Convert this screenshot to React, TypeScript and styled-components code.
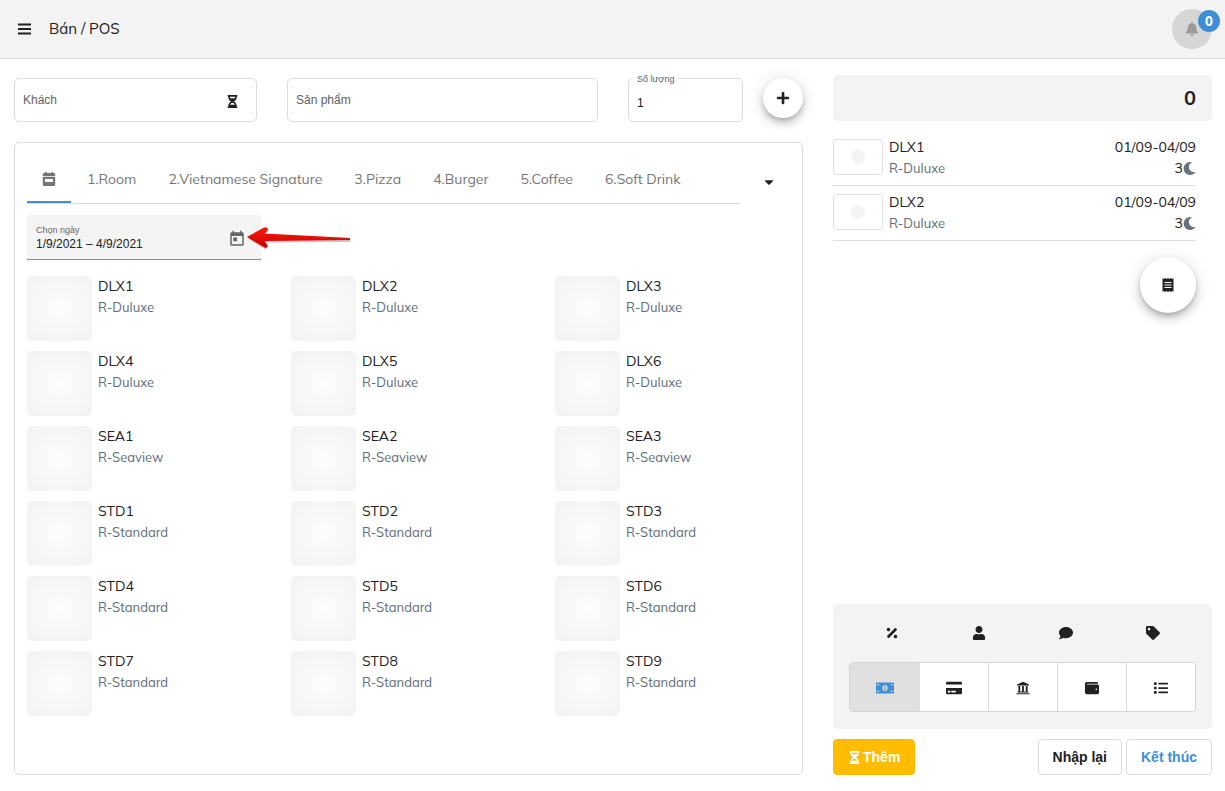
import React from 'react';
import styled, { createGlobalStyle, css } from 'styled-components';
import {
  FaBell, FaPlus, FaMoon, FaPercentage, FaUser, FaComment, FaTag,
  FaCreditCard, FaWallet, FaList, FaHourglassHalf, FaCaretDown,
} from 'react-icons/fa';
import { MdToday } from 'react-icons/md';

const BLUE = '#3f8fd6';
const INK = '#212121';
const LINE = '#dcdcdc';
const PANEL = '#f3f3f3';
const UI = 'Muli, Mulish, Nunito, "Open Sans", "Noto Sans", sans-serif';
const FORM = 'Helvetica, "Liberation Sans", Arial, sans-serif';

const Global = createGlobalStyle`
  *, *::before, *::after { box-sizing: border-box; }
  html, body, #root { height: 100%; }
  body { margin: 0; background: #fff; color: ${INK}; font-family: ${UI}; font-size: 14px; line-height: 20px; }
  button, input { font: inherit; color: inherit; }
  button { cursor: pointer; background: none; border: 0; padding: 0; }
  svg { display: block; flex: none; }
  h1, p { margin: 0; }
`;

const Page = styled.div`
  min-height: 100%;
  display: flex;
  flex-direction: column;
`;

const TopBar = styled.header`
  display: flex;
  align-items: center;
  height: 59px;
  padding: 0 13px 0 18px;
  background: ${PANEL};
  border-bottom: 1px solid ${LINE};
`;

const PageTitle = styled.h1`
  flex: 1;
  padding-left: 18px;
  font-size: 15px;
  font-weight: 400;
`;

const BellButton = styled.button`
  position: relative;
  display: grid;
  place-items: center;
  width: 40px;
  height: 40px;
  border-radius: 50%;
  background: #d6d6d6;
  color: #9b9b9b;
`;

const Badge = styled.span`
  position: absolute;
  top: 1px;
  right: -8px;
  width: 22px;
  border-radius: 11px;
  background: ${BLUE};
  color: #fff;
  font-size: 13px;
  font-weight: 800;
  line-height: 22px;
  text-align: center;
`;

const Body = styled.div`
  flex: 1;
  display: flex;
  gap: 30px;
  padding: 16px 13px 16px 14px;
`;

const Main = styled.main`
  flex: 1;
  min-width: 0;
  display: flex;
  flex-direction: column;
  gap: 20px;
`;

const Filters = styled.form`
  display: flex;
  align-items: flex-start;
  padding-top: 3px;
  font-family: ${FORM};
  font-size: 12px;
`;

const Outlined = styled.div<{ $share: number; $gap: number }>`
  position: relative;
  flex: ${p => p.$share} 1 ${p => p.$share}px;
  min-width: 0;
  display: flex;
  align-items: center;
  height: 44px;
  margin-right: ${p => p.$gap}px;
  border: 1px solid ${LINE};
  border-radius: 5px;
  input {
    flex: 1;
    align-self: stretch;
    min-width: 0;
    width: 100%;
    border: 0;
    padding: 6px 8px 0;
    outline: 0;
    background: none;
  }
`;

const FieldLabel = styled.label<{ $raised?: boolean }>`
  position: absolute;
  top: 11px;
  left: 4px;
  padding: 0 4px;
  color: #616161;
  pointer-events: none;
  ${p => p.$raised && css`
    top: -6px;
    background: #fff;
    font-size: 9px;
    line-height: 12px;
  `}
`;

const TrailingButton = styled.button`
  margin-right: 17px;
  padding-top: 2px;
`;

const RoundButton = styled.button<{ $size: number }>`
  display: grid;
  place-items: center;
  flex: none;
  width: ${p => p.$size}px;
  height: ${p => p.$size}px;
  border-radius: 50%;
  background: #fff;
  box-shadow: 0 3px 5px -1px rgba(0,0,0,.2), 0 6px 10px rgba(0,0,0,.14), 0 1px 18px rgba(0,0,0,.12);
`;

const Catalog = styled.section`
  flex: 1;
  padding: 12px 4px 12px 12px;
  border: 1px solid ${LINE};
  border-radius: 5px;
`;

const TabRow = styled.div`
  display: flex;
  align-items: center;
`;

const Tabs = styled.div`
  flex: 1;
  min-width: 0;
  display: flex;
  height: 49px;
  border-bottom: 1px solid ${LINE};
`;

const Tab = styled.button<{ $active?: boolean }>`
  display: flex;
  align-items: center;
  padding: 0 16px;
  color: #757575;
  white-space: nowrap;
  ${p => p.$active && css`
    justify-content: center;
    width: 44px;
    padding: 0;
    box-shadow: inset 0 -2px ${BLUE};
  `}
`;

const MoreButton = styled.button`
  display: grid;
  place-items: center;
  width: 58px;
  height: 48px;
  padding-top: 4px;
`;

const DateField = styled.div`
  display: flex;
  align-items: center;
  justify-content: space-between;
  width: 234px;
  max-width: 100%;
  height: 45px;
  margin: 11px 0 16px;
  padding: 2px 15px 0 9px;
  background: #f4f4f4;
  border-bottom: 1px solid #8c8c8c;
  border-radius: 4px 4px 0 0;
  font-family: ${FORM};
  color: #666;
`;

const DateText = styled.div`
  flex: 1;
  display: flex;
  flex-direction: column;
  label { font-size: 9px; line-height: 12px; }
  input {
    width: 100%;
    padding: 0;
    border: 0;
    outline: 0;
    background: none;
    color: ${INK};
    font-size: 12px;
    line-height: 16px;
  }
`;

const DateButton = styled.button`
  position: relative;
  padding-top: 1px;
`;

const Arrow = styled.svg`
  position: absolute;
  left: 18px;
  top: -4px;
  pointer-events: none;
`;

const Rooms = styled.div`
  display: grid;
  grid-template-columns: repeat(3, 1fr);
  gap: 10px;
  margin-right: -11px;
`;

const Room = styled.button`
  display: flex;
  align-items: flex-start;
  gap: 6px;
  text-align: left;
`;

const Thumb = styled.span`
  width: 65px;
  height: 65px;
  border-radius: 5px;
  background: radial-gradient(circle, #fdfdfd 0%, #f2f2f2 100%);
`;

const ItemText = styled.span`
  display: flex;
  flex-direction: column;
  gap: 2px;
`;

const Muted = styled.span`
  color: #606c77;
  font-size: 13px;
  line-height: 19px;
`;

const Side = styled.aside`
  flex: 0 1 379px;
  min-width: 300px;
  display: flex;
  flex-direction: column;
`;

const Total = styled.output`
  display: block;
  padding: 0 16px;
  border-radius: 5px;
  background: ${PANEL};
  font-size: 20px;
  font-weight: 700;
  line-height: 46px;
  text-align: right;
`;

const Lines = styled.ul`
  margin: 10px 16px 16px 0;
  padding: 0;
  list-style: none;
`;

const OrderLine = styled.li`
  display: flex;
  align-items: flex-start;
  gap: 6px;
  height: 55px;
  padding-top: 6px;
  border-bottom: 1px solid ${LINE};
`;

const OrderThumb = styled.span`
  display: grid;
  place-items: center;
  width: 50px;
  height: 36px;
  margin-top: 2px;
  border: 1px solid #e0e0e0;
  border-radius: 4px;
  &::after {
    content: '';
    width: 14px;
    height: 14px;
    border-radius: 50%;
    background: ${PANEL};
  }
`;

const LineEnd = styled(ItemText)`
  margin-left: auto;
  align-items: flex-end;
`;

const Nights = styled.span`
  display: flex;
  align-items: center;
  line-height: 19px;
  svg { color: #66737e; }
`;

const ReceiptSlot = styled.div`
  flex: 1;
  display: flex;
  justify-content: flex-end;
  align-items: flex-start;
  padding-right: 16px;
`;

const PayPanel = styled.div`
  padding: 16px 16px 17px;
  border-radius: 5px;
  background: ${PANEL};
`;

const Extras = styled.div`
  display: grid;
  grid-template-columns: repeat(4, 1fr);
  height: 26px;
  margin-bottom: 16px;
`;

const IconButton = styled.button`
  display: grid;
  place-items: center;
`;

const Methods = styled.div`
  display: grid;
  grid-template-columns: repeat(5, 1fr);
  height: 50px;
  border: 1px solid #d4d4d4;
  border-radius: 4px;
  background: #fff;
  overflow: hidden;
`;

const Method = styled(IconButton)<{ $on?: boolean }>`
  padding-top: 2px;
  color: ${p => (p.$on ? BLUE : INK)};
  background: ${p => (p.$on ? '#e0e0e0' : '#fff')};
  & + & { border-left: 1px solid #dcdcdc; }
`;

const Actions = styled.div`
  display: flex;
  gap: 4px;
  margin-top: 10px;
`;

const Action = styled.button<{ $kind: 'add' | 'plain' | 'done' }>`
  display: flex;
  align-items: center;
  gap: 2px;
  height: 36px;
  padding: 0 14px;
  border: 1px solid ${LINE};
  border-radius: 4px;
  font-family: ${FORM};
  font-size: 14px;
  font-weight: 700;
  ${p => p.$kind === 'add' && css`
    margin-right: auto;
    border-color: #ffbc00;
    background: #ffbc00;
    color: #fff;
  `}
  ${p => p.$kind === 'done' && css`color: ${BLUE};`}
`;

const MenuIcon = () => (
  <svg width="13" height="12" viewBox="0 0 13 12" fill="currentColor" aria-hidden="true">
    <path d="M0 .5h13v2H0zM0 5h13v2H0zM0 9.500h13v2H0z" />
  </svg>
);

const CalendarIcon = () => (
  <svg width="14" height="16" viewBox="0 0 14 16" fill="currentColor" aria-hidden="true">
    <path d="M3 1h1.600v1h4.800V1H11v1h1a1.200 1.200 0 0 1 1.200 1.200V5H.8V3.200A1.200 1.200 0 0 1 2 2h1z" />
    <path fillRule="evenodd" d="M.8 5.800h12.400v8A1.200 1.200 0 0 1 12 15H2a1.200 1.200 0 0 1-1.200-1.200zM3 8v3h8V8z" />
  </svg>
);

const ReceiptIcon = () => (
  <svg width="12" height="16" viewBox="0 0 12 16" aria-hidden="true">
    <path fill="currentColor" d="M.5 1l1.300 1L3.200 1l1.400 1L6 1l1.400 1 1.400-1 1.400 1 1.300-1v14l-1.300-1-1.400 1-1.400-1L6 15l-1.400-1-1.400 1-1.400-1-1.300 1z" />
    <path stroke="#fff" d="M2.500 5.500h7M2.500 8h7M2.500 10.500h7" />
  </svg>
);

const BankIcon = () => (
  <svg width="14" height="14" viewBox="0 0 14 14" fill="currentColor" aria-hidden="true">
    <path d="M7 .8l6 2.600v1H1v-1zM2.400 5h1.800v6H2.400zM6.100 5h1.800v6H6.100zM9.800 5h1.800v6H9.800zM1.600 10.600h10.800v1H1.600zM.5 12.200h13v1.100H.5z" />
  </svg>
);

const CashIcon = () => (
  <svg width="18" height="12" viewBox="0 0 18 12" aria-hidden="true">
    <rect width="18" height="11" y=".5" rx="1" fill="currentColor" />
    <ellipse cx="9" cy="6" rx="2.6" ry="3.1" fill="#e0e0e0" />
    <path d="M8.3 4.6l.9-.4v3.4M8.2 7.6h1.9" stroke="currentColor" strokeWidth=".9" fill="none" />
    <path fill="#e0e0e0" d="M1.4 2h1.8c0 1-.8 1.7-1.8 1.7zM16.6 2h-1.8c0 1 .8 1.7 1.8 1.7zM1.4 10h1.8c0-1-.8-1.7-1.8-1.7zM16.6 10h-1.8c0-1 .8-1.7 1.8-1.7z" />
  </svg>
);

const PointerArrow = () => (
  <Arrow width="106" height="26" viewBox="0 0 106 26" aria-hidden="true">
    <defs>
      <linearGradient id="arrowRed" x1="0" y1="0" x2="0" y2="1">
        <stop offset="0" stopColor="#ff1a0a" />
        <stop offset="1" stopColor="#c80000" />
      </linearGradient>
    </defs>
    <path d="M2 12.500L18 2.500Q21 1.500 22 4Q22 5.500 18.500 8.500L104 14V16L18.500 16.500L21.500 20.500Q22 24 18.500 23Z" fill="#000" opacity=".22" transform="translate(0 1)" />
    <path d="M1 12L18 2.500Q21 1.500 22 4Q22 5.500 18.500 8.500L104 13V15L18.500 16L21.500 20Q22 23.500 18.500 22.500Z" fill="url(#arrowRed)" />
  </Arrow>
);

const tabs = ['1.Room', '2.Vietnamese Signature', '3.Pizza', '4.Burger', '5.Coffee', '6.Soft Drink'];

const rooms = [
  ...[1, 2, 3, 4, 5, 6].map(n => ({ code: `DLX${n}`, kind: 'R-Duluxe' })),
  ...[1, 2, 3].map(n => ({ code: `SEA${n}`, kind: 'R-Seaview' })),
  ...[1, 2, 3, 4, 5, 6, 7, 8, 9].map(n => ({ code: `STD${n}`, kind: 'R-Standard' })),
];

const order = ['DLX1', 'DLX2'];

export default function App() {
  return (
    <Page>
      <Global />
      <TopBar>
        <IconButton aria-label="Menu"><MenuIcon /></IconButton>
        <PageTitle>Bán / POS</PageTitle>
        <BellButton aria-label="Thông báo">
          <FaBell size={14} />
          <Badge>0</Badge>
        </BellButton>
      </TopBar>
      <Body>
        <Main>
          <Filters onSubmit={e => e.preventDefault()}>
            <Outlined $share={243} $gap={30}>
              <FieldLabel htmlFor="guest">Khách</FieldLabel>
              <input id="guest" />
              <TrailingButton type="button" aria-label="Chờ"><FaHourglassHalf size={13} /></TrailingButton>
            </Outlined>
            <Outlined $share={311} $gap={30}>
              <FieldLabel htmlFor="product">Sản phẩm</FieldLabel>
              <input id="product" />
            </Outlined>
            <Outlined $share={115} $gap={20}>
              <FieldLabel $raised htmlFor="qty">Số lượng</FieldLabel>
              <input id="qty" defaultValue="1" />
            </Outlined>
            <RoundButton $size={40} aria-label="Thêm"><FaPlus size={14} /></RoundButton>
          </Filters>
          <Catalog>
            <TabRow>
              <Tabs role="tablist">
                <Tab $active role="tab" aria-selected="true" aria-label="Lịch"><CalendarIcon /></Tab>
                {tabs.map(t => <Tab key={t} role="tab" aria-selected="false">{t}</Tab>)}
              </Tabs>
              <MoreButton aria-label="Xem thêm"><FaCaretDown size={14} /></MoreButton>
            </TabRow>
            <DateField>
              <DateText>
                <label htmlFor="dates">Chọn ngày</label>
                <input id="dates" defaultValue="1/9/2021 – 4/9/2021" />
              </DateText>
              <DateButton aria-label="Mở lịch">
                <MdToday size={18} />
                <PointerArrow />
              </DateButton>
            </DateField>
            <Rooms>
              {rooms.map(r => (
                <Room key={r.code}>
                  <Thumb />
                  <ItemText><span>{r.code}</span><Muted>{r.kind}</Muted></ItemText>
                </Room>
              ))}
            </Rooms>
          </Catalog>
        </Main>
        <Side>
          <Total>0</Total>
          <Lines>
            {order.map(code => (
              <OrderLine key={code}>
                <OrderThumb />
                <ItemText><span>{code}</span><Muted>R-Duluxe</Muted></ItemText>
                <LineEnd><span>01/09-04/09</span><Nights>3<FaMoon size={13} /></Nights></LineEnd>
              </OrderLine>
            ))}
          </Lines>
          <ReceiptSlot>
            <RoundButton $size={56} aria-label="Hóa đơn"><ReceiptIcon /></RoundButton>
          </ReceiptSlot>
          <PayPanel>
            <Extras>
              <IconButton aria-label="Giảm giá"><FaPercentage size={14} /></IconButton>
              <IconButton aria-label="Nhân viên"><FaUser size={14} /></IconButton>
              <IconButton aria-label="Ghi chú"><FaComment size={14} /></IconButton>
              <IconButton aria-label="Thẻ"><FaTag size={14} /></IconButton>
            </Extras>
            <Methods>
              <Method $on aria-label="Tiền mặt"><CashIcon /></Method>
              <Method aria-label="Thẻ tín dụng"><FaCreditCard size={16} /></Method>
              <Method aria-label="Ngân hàng"><BankIcon /></Method>
              <Method aria-label="Ví"><FaWallet size={14} /></Method>
              <Method aria-label="Khác"><FaList size={14} /></Method>
            </Methods>
          </PayPanel>
          <Actions>
            <Action $kind="add"><FaHourglassHalf size={13} />Thêm</Action>
            <Action $kind="plain">Nhập lại</Action>
            <Action $kind="done">Kết thúc</Action>
          </Actions>
        </Side>
      </Body>
    </Page>
  );
}
